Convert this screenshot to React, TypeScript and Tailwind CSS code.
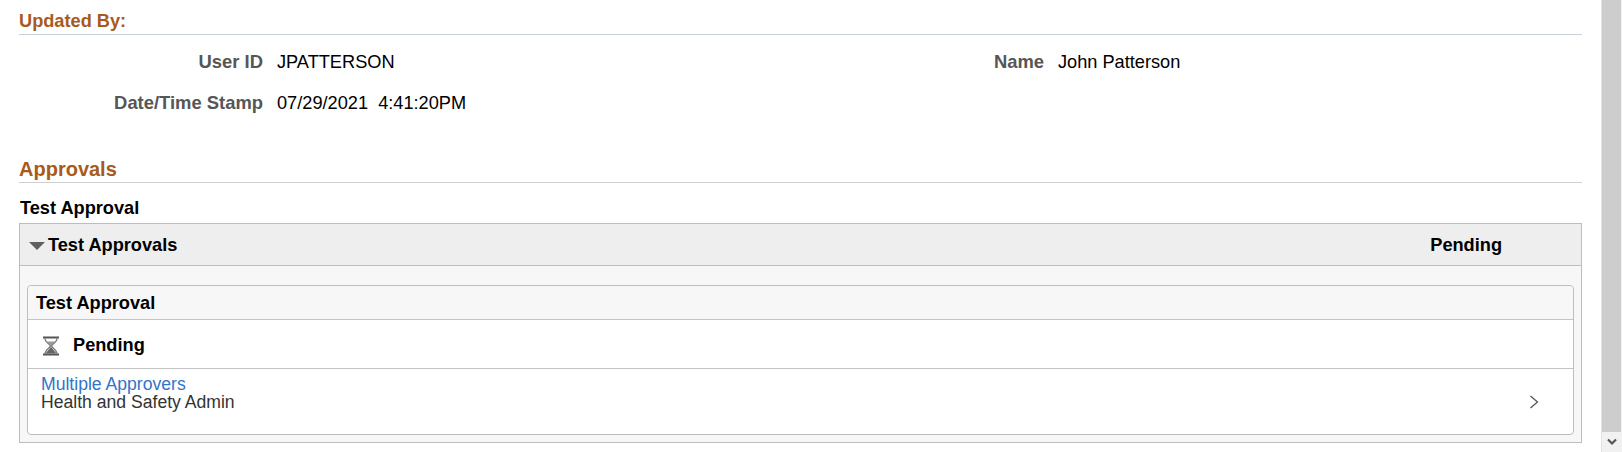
export default function App() {
  return (
    <div className="flex h-[452px] w-[1622px] overflow-hidden bg-white font-['Liberation_Sans',Arial,sans-serif] text-[18.2px] text-black">
      <main className="min-w-0 flex-1 pl-[19px] pr-[19px]">
        <h2 className="mt-[10px] h-[25px] border-b border-[#cbd2d9] font-bold leading-[22px] text-[#a85a1d]">
          Updated By:
        </h2>
        <div className="mt-[16px] flex h-[22px] items-baseline leading-[22px]">
          <span className="w-[244px] text-right text-[18.4px] font-bold text-[#565656]">User ID</span>
          <span className="ml-[14px] w-[450px]">JPATTERSON</span>
          <span className="w-[317px] text-right text-[18.4px] font-bold text-[#565656]">Name</span>
          <span className="ml-[14px]">John Patterson</span>
        </div>
        <div className="mt-[19px] flex h-[22px] items-baseline leading-[22px]">
          <span className="w-[244px] text-right text-[18.4px] font-bold text-[#565656]">Date/Time Stamp</span>
          <span className="ml-[14px] whitespace-pre">07/29/2021  4:41:20PM</span>
        </div>
        <h2 className="mt-[42px] h-[27px] border-b border-[#cfcfd4] text-[20px] font-bold leading-[26px] text-[#a85a1d]">
          Approvals
        </h2>
        <h3 className="mt-[14px] h-[21px] pl-px font-bold leading-[22px]">Test Approval</h3>
        <section className="mt-[5px] h-[220px] border border-[#bdbdbd] bg-[#f7f7f7]">
          <div className="flex h-[42px] items-center border-b border-[#bdbdbd] bg-[#eeeeee] pl-[9px] pt-[2px]">
            <span className="h-0 w-0 border-x-[8px] border-t-[8px] border-x-transparent border-t-[#5f5f5f]" />
            <span className="ml-[3px] font-bold">Test Approvals</span>
            <span className="ml-auto mr-[79px] font-bold">Pending</span>
          </div>
          <div className="mx-[7px] mt-[19px] h-[150px] rounded-[4px] border border-[#bdbdbd] bg-white">
            <div className="flex h-[34px] items-center rounded-t-[4px] border-b border-[#c4c4c4] bg-[#f7f7f7] pl-[8px] pt-[2px] font-bold">
              Test Approval
            </div>
            <div className="flex h-[49px] items-center border-b border-[#c4c4c4] pl-[14px] pt-[3px] font-bold">
              <svg width="18" height="20" viewBox="0 0 18 20" fill="none">
                <path d="M1 1.500h16M1 18.500h16" stroke="#555" strokeWidth="2" />
                <path d="M3 2.500c0 4 5 5.500 5.500 7.500C8 12 3 14 3 17.500M15 2.500c0 4-5 5.500-5.500 7.500C10 12 15 14 15 17.500" stroke="#777" strokeWidth="1.200" />
                <path d="M4.500 5.500h9L9 9.500z" fill="#999" />
                <path d="M9 11L14.500 17.500H3.500z" fill="#666" />
              </svg>
              <span className="ml-[13px]">Pending</span>
            </div>
            <div className="flex h-[65px] items-center pl-[13px] pr-[34px]">
              <div className="-mt-[17px] flex-1 text-[17.6px] leading-[18px] text-[#333333]">
                <a className="block text-[#3373c9]">Multiple Approvers</a>
                <div>Health and Safety Admin</div>
              </div>
              <svg width="10" height="14" viewBox="0 0 10 14" fill="none">
                <path d="M1.500 1l7 6-7 6" stroke="#555" strokeWidth="1.300" />
              </svg>
            </div>
          </div>
        </section>
      </main>
      <aside className="flex w-[21px] flex-col border-l border-[#e3e3e3] bg-[#f1f1f1]">
        <div className="h-[432px] w-[19px] bg-[#cdcdcd]" />
        <div className="flex flex-1 items-center justify-center">
          <svg width="10" height="8" viewBox="0 0 10 8" fill="none">
            <path d="M1 1.500l4 4 4-4" stroke="#555" strokeWidth="2.200" />
          </svg>
        </div>
      </aside>
    </div>
  )
}
